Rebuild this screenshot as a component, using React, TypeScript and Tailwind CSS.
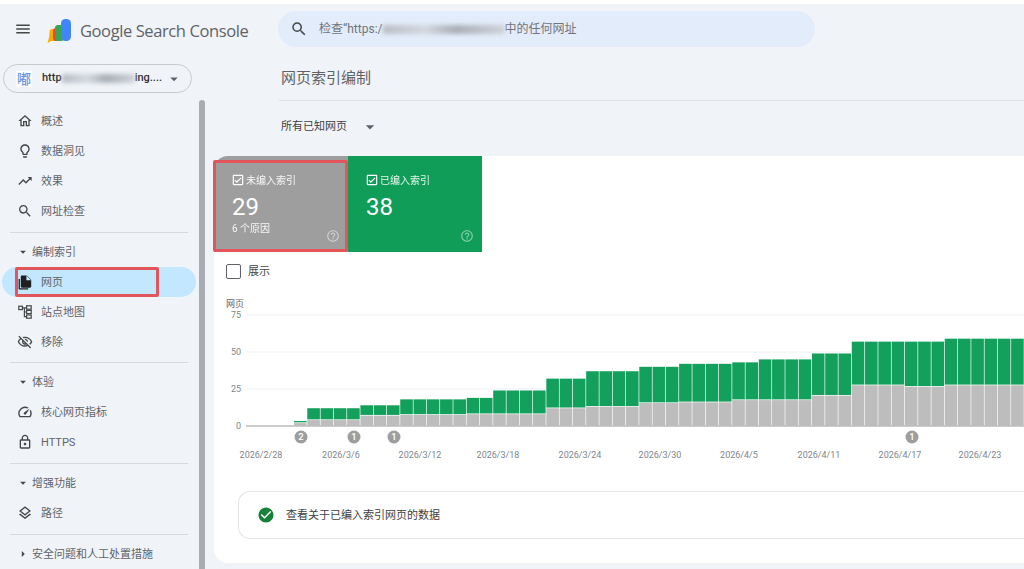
import {
  MdArrowDropDown,
  MdArrowRight,
  MdCheckCircle,
  MdHelpOutline,
  MdMenu,
  MdOutlineCheckBox,
  MdOutlineHome,
  MdOutlineLayers,
  MdOutlineLightbulb,
  MdOutlineLock,
  MdOutlineSpeed,
  MdOutlineVisibilityOff,
  MdSearch,
  MdTrendingUp,
} from 'react-icons/md';
import type { ReactNode } from 'react';

// [bar count, total, not indexed]
const barRuns: [number, number, number][] = [
  [1, 3.4, 2],
  [4, 12, 4],
  [3, 14, 7],
  [5, 18, 7.5],
  [2, 19, 8],
  [4, 24, 8],
  [3, 32, 12],
  [4, 37, 13],
  [3, 40, 15.5],
  [4, 42, 16],
  [2, 43, 17.5],
  [4, 45, 17.5],
  [3, 49, 20.5],
  [4, 57, 27.5],
  [3, 57, 26.5],
  [6, 59, 27.5],
];

const bars = barRuns.flatMap(([count, total, gray]) =>
  Array.from({ length: count }, () => ({ total, gray })),
);

const dates = [
  ['2026/2/28', 261],
  ['2026/3/6', 341],
  ['2026/3/12', 420],
  ['2026/3/18', 498],
  ['2026/3/24', 580],
  ['2026/3/30', 660],
  ['2026/4/5', 739],
  ['2026/4/11', 819],
  ['2026/4/17', 900],
  ['2026/4/23', 980],
] as const;

const markers = [
  [301, '2'],
  [354, '1'],
  [394, '1'],
  [912, '1'],
] as const;

function Logo() {
  return (
    <svg width="25" height="24" viewBox="0 0 25 24" className="shrink-0">
      <path d="M0.5 24 L5 21.5 L9 9.5 C5.5 9.5 3 13 2.5 17 Z" fill="#f9ab00" />
      <rect x="2.5" y="10" width="7" height="12" rx="3" fill="#f9ab00" />
      <rect x="6" y="9" width="6" height="13" rx="3" fill="#ea4335" />
      <rect x="8" y="6" width="9" height="16" rx="3" fill="#34a853" />
      <rect x="14" y="0" width="10" height="22" rx="4.5" fill="#4285f4" />
    </svg>
  );
}

function PageIcon() {
  return (
    <svg width="14" height="15" viewBox="0 0 14 15">
      <path d="M0.6 4v9.4c0 .7.5 1.2 1.2 1.2h8.4v-1.3H1.9V4z" fill="#1f1f1f" />
      <path d="M4 0.4h4.8L13.2 4.8v6.8c0 .7-.5 1.2-1.2 1.2H4c-.7 0-1.2-.5-1.2-1.2V1.6c0-.7.5-1.2 1.2-1.2z" fill="#1f1f1f" />
      <path d="M8.4 0.4V5.2H13.2z" fill="#c2e7ff" />
    </svg>
  );
}

function SitemapIcon() {
  return (
    <svg width="14" height="14" viewBox="0 0 14 14" fill="none" stroke="#444746" strokeWidth="1.2">
      <rect x="0.8" y="1.2" width="3.6" height="3.4" />
      <rect x="8.6" y="0.8" width="4.6" height="3.4" />
      <rect x="8.6" y="5.4" width="4.6" height="3.2" />
      <rect x="8.6" y="10" width="4.6" height="3.2" />
      <path d="M4.4 2.8h4.2M6.4 2.8v8.8h2.2M6.4 7h2.2" />
    </svg>
  );
}

function Blurred({ className }: { className: string }) {
  return (
    <span
      className={`inline-block h-[9px] shrink-0 blur-[2px] bg-[linear-gradient(90deg,#b9bec6,#d3d7dd_35%,#a9aeb6_60%,#cfd3d9)] ${className}`}
    />
  );
}

function NavItem({ icon, label, active }: { icon: ReactNode; label: string; active?: boolean }) {
  return (
    <div
      className={`flex h-[30px] items-center rounded-full pl-[15px] text-[11px] text-[#5f6368] ${
        active ? 'bg-[#c2e7ff] text-[#3c4043]' : ''
      }`}
    >
      <span className="flex w-[16px] justify-center text-[16px] text-[#444746]">{icon}</span>
      <span className="ml-[8px] mt-[2px]">{label}</span>
    </div>
  );
}

function NavHeader({ label, closed }: { label: string; closed?: boolean }) {
  return (
    <div className="flex h-[20px] items-center pl-[14px] text-[11px] text-[#5f6368]">
      {closed ? <MdArrowRight className="text-[14px] text-[#444746]" /> : <MdArrowDropDown className="text-[14px] text-[#444746]" />}
      <span className="ml-[2px] mt-[2px]">{label}</span>
    </div>
  );
}

function Divider() {
  return <div className="ml-[8px] mr-[8px] h-px bg-[#d6d9dd]" />;
}

function Tile({ label, value, note, color }: { label: string; value: string; note?: string; color: string }) {
  return (
    <div className={`relative h-[96px] w-[134px] pl-[17px] pt-[17px] text-white ${color}`}>
      <div className="flex h-[14px] items-center text-[10px]">
        <MdOutlineCheckBox className="text-[14px]" />
        <span className="ml-px opacity-90">{label}</span>
      </div>
      <div className="ml-px mt-[4px] text-[24px] leading-[32px]">{value}</div>
      {note && <div className="-mt-[1px] ml-px text-[10px] leading-[14px] opacity-90">{note}</div>}
      <MdHelpOutline className="absolute bottom-[9px] right-[8px] text-[14px] opacity-50" />
    </div>
  );
}

function Chart() {
  return (
    <svg viewBox="214 290 810 190" className="block h-[190px] w-[810px] font-[Roboto,'Noto_Sans_CJK_SC',sans-serif]">
      <text x="226" y="306.5" fontSize="9" fill="#5f6368">网页</text>
      {[
        ['75', 315],
        ['50', 352],
        ['25', 389],
      ].map(([label, y]) => (
        <g key={label}>
          <line x1="247" x2="1024" y1={y} y2={y} stroke="#eef0f2" />
          <text x="241" y={Number(y) + 3.2} fontSize="9" textAnchor="end" fill="#80868b">{label}</text>
        </g>
      ))}
      <text x="241" y="429.2" fontSize="9" textAnchor="end" fill="#80868b">0</text>
      <line x1="246" x2="1024" y1="426" y2="426" stroke="#bdbdbd" strokeWidth="1.5" />
      {bars.map((bar, i) => {
        const x = 294 + i * 13.28;
        const topY = 426 - bar.total * 1.48;
        const grayY = 426 - bar.gray * 1.48;
        return (
          <g key={i}>
            <rect x={x} y={topY} width={12.6} height={grayY - topY - 0.7} fill="#12a05c" />
            <rect x={x} y={grayY} width={12.6} height={426 - grayY} fill="#bdbdbd" />
          </g>
        );
      })}
      {markers.map(([x, label]) => (
        <g key={x}>
          <circle cx={x} cy="437" r="6.5" fill="#9e9e9e" />
          <text x={x} y="440.3" fontSize="9.5" fontWeight="500" textAnchor="middle" fill="#fff">{label}</text>
        </g>
      ))}
      {dates.map(([label, x]) => (
        <text key={label} x={x} y="458.3" fontSize="9" textAnchor="middle" fill="#80868b">{label}</text>
      ))}
    </svg>
  );
}

export default function App() {
  return (
    <div className="h-[569px] w-[1024px] overflow-hidden bg-white pt-[4px] font-[Roboto,'Noto_Sans_CJK_SC',sans-serif]">
      <div className="flex h-[565px] flex-col bg-[#f0f4f9]">
        <header className="flex h-[50px] shrink-0 items-center">
          <MdMenu className="ml-[14px] text-[18px] text-[#444746]" />
          <div className="ml-[15px] mt-[4px]">
            <Logo />
          </div>
          <span className="ml-[8px] mt-[4px] w-[170px] whitespace-nowrap font-['Open_Sans',sans-serif] text-[16.5px] tracking-[-0.4px] text-[#5f6368]">
            Google Search Console
          </span>
          <div className="ml-[28px] flex h-[36px] w-[537px] items-center rounded-full bg-[#e3ecfa] pl-[12px] text-[12px] text-[#70757a]">
            <MdSearch className="text-[18px] text-[#444746]" />
            <span className="ml-[11px]">检查“https:/</span>
            <Blurred className="w-[122px]" />
            <span>中的任何网址</span>
          </div>
        </header>

        <div className="flex min-h-0 flex-1">
          <aside className="relative h-full w-[214px] shrink-0 overflow-hidden">
            <div className="w-[196px] pl-[2px] pt-[10px]">
              <div className="ml-px flex h-[29px] w-[189px] items-center rounded-full border border-[#c7cacd] pl-[12px] text-[11px] font-medium text-[#303134]">
                <span className="flex h-[16px] w-[16px] items-center justify-center bg-white text-[14px] leading-none text-[#6b9ae0]">嘟</span>
                <span className="ml-[10px]">http</span>
                <Blurred className="w-[73px]" />
                <span>ing....</span>
                <MdArrowDropDown className="ml-[3px] text-[18px] text-[#5f6368]" />
              </div>
              <div className="mt-[13px]">
                <NavItem icon={<MdOutlineHome />} label="概述" />
                <NavItem icon={<MdOutlineLightbulb />} label="数据洞见" />
                <NavItem icon={<MdTrendingUp />} label="效果" />
                <NavItem icon={<MdSearch />} label="网址检查" />
              </div>
              <div className="mt-[6px]"><Divider /></div>
              <div className="mt-[9px]"><NavHeader label="编制索引" /></div>
              <div className="mt-[5px]">
                <NavItem icon={<PageIcon />} label="网页" active />
                <NavItem icon={<SitemapIcon />} label="站点地图" />
                <NavItem icon={<MdOutlineVisibilityOff />} label="移除" />
              </div>
              <div className="mt-[5px]"><Divider /></div>
              <div className="mt-[9px]"><NavHeader label="体验" /></div>
              <div className="mt-[5px]">
                <NavItem icon={<MdOutlineSpeed />} label="核心网页指标" />
                <NavItem icon={<MdOutlineLock />} label="HTTPS" />
              </div>
              <div className="mt-[6px]"><Divider /></div>
              <div className="mt-[9px]"><NavHeader label="增强功能" /></div>
              <div className="mt-[5px]">
                <NavItem icon={<MdOutlineLayers />} label="路径" />
              </div>
              <div className="mt-[6px]"><Divider /></div>
              <div className="mt-[9px]"><NavHeader label="安全问题和人工处置措施" closed /></div>
            </div>
            <div className="absolute bottom-0 left-[199px] top-[46px] w-[6px] rounded-t-full bg-[#a9acb0]" />
            <div className="absolute left-[15px] top-[213px] h-[30px] w-[144px] rounded-[2px] border-[3px] border-[#e2555a]" />
          </aside>

          <main className="relative min-w-0 flex-1">
            <div className="ml-[65px] flex h-[47px] items-center border-b border-[#dde1e6] pl-[2px] pt-[3px] text-[15px] text-[#5f6368]">
              网页索引编制
            </div>
            <div className="ml-[67px] flex h-[55px] items-center pb-[3px] text-[11px] text-[#3c4043]">
              所有已知网页
              <MdArrowDropDown className="ml-[13px] text-[20px] text-[#5f6368]" />
            </div>
            <section className="h-[407px] w-[820px] rounded-l-[14px] bg-white">
              <div className="flex">
                <Tile label="未编入索引" value="29" note="6 个原因" color="rounded-tl-[14px] bg-[#9e9e9e]" />
                <Tile label="已编入索引" value="38" color="bg-[#109d58]" />
              </div>
              <div className="flex h-[38px] items-center pl-[12px] text-[11px] text-[#444746]">
                <span className="h-[15px] w-[15px] rounded-[2px] border-[1.5px] border-[#5f6368]" />
                <span className="ml-[7px] mt-[2px]">展示</span>
              </div>
              <Chart />
              <div className="ml-[24px] mt-[11px] flex h-[48px] items-center rounded-l-[12px] border border-r-0 border-[#e3e5e8] pl-[18px] text-[11px] text-[#3c4043]">
                <MdCheckCircle className="text-[18px] text-[#188038]" />
                <span className="ml-[11px] mt-[2px]">查看关于已编入索引网页的数据</span>
              </div>
            </section>
            <div className="absolute left-[-1px] top-[106px] h-[92px] w-[135px] rounded-[2px] border-[3px] border-[#e2555a]" />
          </main>
        </div>
      </div>
    </div>
  );
}
